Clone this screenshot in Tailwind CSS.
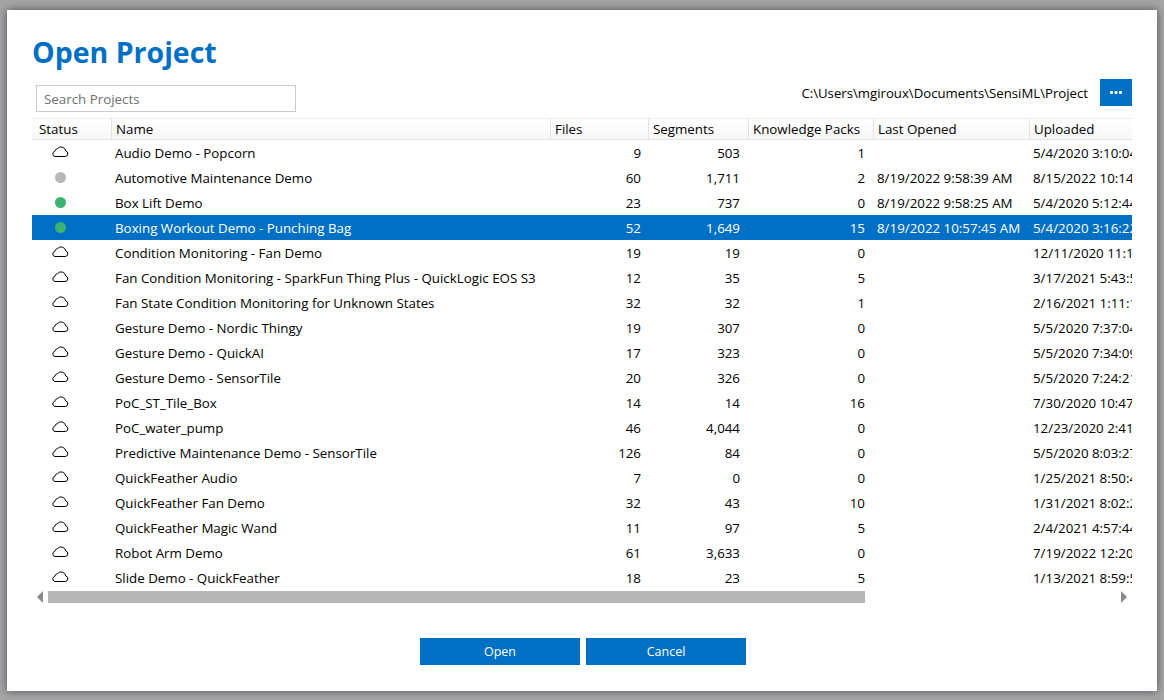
<!DOCTYPE html>
<html lang="en">

<head>
    <meta charset="UTF-8">
    <title>Open Project</title>
    <script src="https://cdn.jsdelivr.net/npm/@tailwindcss/browser@4"></script>
</head>

<body class="h-[700px] w-[1164px] overflow-hidden bg-[#a5a5a5] font-['Open_Sans',sans-serif] text-[13.33px] text-black">
    <div class="pt-[10px] pl-[7px]">
        <main class="flex h-[681px] w-[1150px] flex-col bg-white pl-[25px] shadow-[0_0_8px_rgba(40,40,60,0.7)]">
            <h1 class="pt-[23px] text-[28.5px] leading-[38px] font-bold text-[#0070c5]">Open Project</h1>

            <div class="mt-[8px] flex h-[33px] w-[1100px] justify-between pl-1">
                <input class="h-[27px] w-[260px] self-end border border-[#cccccc] px-[7px] text-[13.33px] placeholder:text-[#707070]" placeholder="Search Projects">
                <div class="flex h-[27px] items-center gap-3">
                    <span class="pt-[2px] text-[13.2px]">C:\Users\mgiroux\Documents\SensiML\Project</span>
                    <button class="flex h-[27px] w-[32px] items-center justify-center bg-[#0070c5]">
                        <svg width="12" height="3" viewBox="0 0 12 3" fill="white"><rect x="0" width="3" height="3" rx="1"/><rect x="4.5" width="3" height="3" rx="1"/><rect x="9" width="3" height="3" rx="1"/></svg>
                    </button>
                </div>
            </div>

            <div class="mt-[6px] w-[1100px] overflow-hidden">
                <table class="w-[1220px] table-fixed border-separate border-spacing-0 whitespace-nowrap">
                    <colgroup>
                        <col class="w-[80px]"><col class="w-[439px]"><col class="w-[98px]"><col class="w-[100px]"><col class="w-[125px]"><col class="w-[156px]"><col class="w-[222px]">
                    </colgroup>
                    <thead class="[&_th]:h-[22px] [&_th]:border-t [&_th]:border-r [&_th]:border-b [&_th]:border-t-[#eeeeee] [&_th]:border-r-[#e4e4e4] [&_th]:border-b-[#e4e4e4] [&_th]:bg-gradient-to-b [&_th]:from-white [&_th]:to-[#f7f7f7] [&_th]:pb-[1px] [&_th]:pl-[4px] [&_th]:text-left [&_th]:leading-[18px] [&_th]:font-normal [&_th:first-child]:pl-[7px]">
                        <tr>
                            <th>Status</th><th>Name</th><th>Files</th><th>Segments</th><th>Knowledge Packs</th><th>Last Opened</th><th>Uploaded</th>
                        </tr>
                    </thead>
                    <tbody class="[&_td]:h-[25px] [&_td]:overflow-hidden [&_td]:px-0 [&_td]:pt-[3px] [&_td]:pb-0 [&_td:nth-child(2)]:pl-[3px] [&_td:nth-child(3)]:pr-[8px] [&_td:nth-child(3)]:text-right [&_td:nth-child(4)]:pr-[9px] [&_td:nth-child(4)]:text-right [&_td:nth-child(5)]:pr-[9px] [&_td:nth-child(5)]:text-right [&_td:nth-child(6)]:pl-[3px] [&_td:nth-child(7)]:pl-[3px] [&_svg]:mb-[6px] [&_svg]:ml-[19px]">
                        <tr>
                            <td><svg width="18" height="12" viewBox="0 0 18 12" fill="none" stroke="black" stroke-width="1"><path d="M4 11.5H14.2A2.8 2.8 0 0 0 14.8 6A4.8 4.8 0 0 0 6.3 3.7A3.1 3.1 0 0 0 3.8 6.4A2.6 2.6 0 0 0 4 11.5Z"/></svg></td>
                            <td>Audio Demo - Popcorn</td><td>9</td><td>503</td><td>1</td><td></td><td>5/4/2020 3:10:04 PM</td>
                        </tr>
                        <tr>
                            <td><div class="mb-[3px] ml-[23px] h-[11px] w-[11px] rounded-full bg-[#b8b8b8]"></div></td>
                            <td>Automotive Maintenance Demo</td><td>60</td><td>1,711</td><td>2</td><td>8/19/2022 9:58:39 AM</td><td>8/15/2022 10:14:22 AM</td>
                        </tr>
                        <tr>
                            <td><div class="mb-[3px] ml-[23px] h-[11px] w-[11px] rounded-full bg-[#3cb371]"></div></td>
                            <td>Box Lift Demo</td><td>23</td><td>737</td><td>0</td><td>8/19/2022 9:58:25 AM</td><td>5/4/2020 5:12:44 PM</td>
                        </tr>
                        <tr class="bg-[#0070c5] text-white">
                            <td><div class="mb-[3px] ml-[23px] h-[11px] w-[11px] rounded-full bg-[#3cb371]"></div></td>
                            <td>Boxing Workout Demo - Punching Bag</td><td>52</td><td>1,649</td><td>15</td><td>8/19/2022 10:57:45 AM</td><td>5/4/2020 3:16:22 PM</td>
                        </tr>
                        <tr>
                            <td><svg width="18" height="12" viewBox="0 0 18 12" fill="none" stroke="black" stroke-width="1"><path d="M4 11.5H14.2A2.8 2.8 0 0 0 14.8 6A4.8 4.8 0 0 0 6.3 3.7A3.1 3.1 0 0 0 3.8 6.4A2.6 2.6 0 0 0 4 11.5Z"/></svg></td>
                            <td>Condition Monitoring - Fan Demo</td><td>19</td><td>19</td><td>0</td><td></td><td>12/11/2020 11:14:08 AM</td>
                        </tr>
                        <tr>
                            <td><svg width="18" height="12" viewBox="0 0 18 12" fill="none" stroke="black" stroke-width="1"><path d="M4 11.5H14.2A2.8 2.8 0 0 0 14.8 6A4.8 4.8 0 0 0 6.3 3.7A3.1 3.1 0 0 0 3.8 6.4A2.6 2.6 0 0 0 4 11.5Z"/></svg></td>
                            <td>Fan Condition Monitoring - SparkFun Thing Plus - QuickLogic EOS S3</td><td>12</td><td>35</td><td>5</td><td></td><td>3/17/2021 5:43:51 PM</td>
                        </tr>
                        <tr>
                            <td><svg width="18" height="12" viewBox="0 0 18 12" fill="none" stroke="black" stroke-width="1"><path d="M4 11.5H14.2A2.8 2.8 0 0 0 14.8 6A4.8 4.8 0 0 0 6.3 3.7A3.1 3.1 0 0 0 3.8 6.4A2.6 2.6 0 0 0 4 11.5Z"/></svg></td>
                            <td>Fan State Condition Monitoring for Unknown States</td><td>32</td><td>32</td><td>1</td><td></td><td>2/16/2021 1:11:17 PM</td>
                        </tr>
                        <tr>
                            <td><svg width="18" height="12" viewBox="0 0 18 12" fill="none" stroke="black" stroke-width="1"><path d="M4 11.5H14.2A2.8 2.8 0 0 0 14.8 6A4.8 4.8 0 0 0 6.3 3.7A3.1 3.1 0 0 0 3.8 6.4A2.6 2.6 0 0 0 4 11.5Z"/></svg></td>
                            <td>Gesture Demo - Nordic Thingy</td><td>19</td><td>307</td><td>0</td><td></td><td>5/5/2020 7:37:04 PM</td>
                        </tr>
                        <tr>
                            <td><svg width="18" height="12" viewBox="0 0 18 12" fill="none" stroke="black" stroke-width="1"><path d="M4 11.5H14.2A2.8 2.8 0 0 0 14.8 6A4.8 4.8 0 0 0 6.3 3.7A3.1 3.1 0 0 0 3.8 6.4A2.6 2.6 0 0 0 4 11.5Z"/></svg></td>
                            <td>Gesture Demo - QuickAI</td><td>17</td><td>323</td><td>0</td><td></td><td>5/5/2020 7:34:09 PM</td>
                        </tr>
                        <tr>
                            <td><svg width="18" height="12" viewBox="0 0 18 12" fill="none" stroke="black" stroke-width="1"><path d="M4 11.5H14.2A2.8 2.8 0 0 0 14.8 6A4.8 4.8 0 0 0 6.3 3.7A3.1 3.1 0 0 0 3.8 6.4A2.6 2.6 0 0 0 4 11.5Z"/></svg></td>
                            <td>Gesture Demo - SensorTile</td><td>20</td><td>326</td><td>0</td><td></td><td>5/5/2020 7:24:21 PM</td>
                        </tr>
                        <tr>
                            <td><svg width="18" height="12" viewBox="0 0 18 12" fill="none" stroke="black" stroke-width="1"><path d="M4 11.5H14.2A2.8 2.8 0 0 0 14.8 6A4.8 4.8 0 0 0 6.3 3.7A3.1 3.1 0 0 0 3.8 6.4A2.6 2.6 0 0 0 4 11.5Z"/></svg></td>
                            <td>PoC_ST_Tile_Box</td><td>14</td><td>14</td><td>16</td><td></td><td>7/30/2020 10:47:10 PM</td>
                        </tr>
                        <tr>
                            <td><svg width="18" height="12" viewBox="0 0 18 12" fill="none" stroke="black" stroke-width="1"><path d="M4 11.5H14.2A2.8 2.8 0 0 0 14.8 6A4.8 4.8 0 0 0 6.3 3.7A3.1 3.1 0 0 0 3.8 6.4A2.6 2.6 0 0 0 4 11.5Z"/></svg></td>
                            <td>PoC_water_pump</td><td>46</td><td>4,044</td><td>0</td><td></td><td>12/23/2020 2:41:16 PM</td>
                        </tr>
                        <tr>
                            <td><svg width="18" height="12" viewBox="0 0 18 12" fill="none" stroke="black" stroke-width="1"><path d="M4 11.5H14.2A2.8 2.8 0 0 0 14.8 6A4.8 4.8 0 0 0 6.3 3.7A3.1 3.1 0 0 0 3.8 6.4A2.6 2.6 0 0 0 4 11.5Z"/></svg></td>
                            <td>Predictive Maintenance Demo - SensorTile</td><td>126</td><td>84</td><td>0</td><td></td><td>5/5/2020 8:03:27 PM</td>
                        </tr>
                        <tr>
                            <td><svg width="18" height="12" viewBox="0 0 18 12" fill="none" stroke="black" stroke-width="1"><path d="M4 11.5H14.2A2.8 2.8 0 0 0 14.8 6A4.8 4.8 0 0 0 6.3 3.7A3.1 3.1 0 0 0 3.8 6.4A2.6 2.6 0 0 0 4 11.5Z"/></svg></td>
                            <td>QuickFeather Audio</td><td>7</td><td>0</td><td>0</td><td></td><td>1/25/2021 8:50:41 PM</td>
                        </tr>
                        <tr>
                            <td><svg width="18" height="12" viewBox="0 0 18 12" fill="none" stroke="black" stroke-width="1"><path d="M4 11.5H14.2A2.8 2.8 0 0 0 14.8 6A4.8 4.8 0 0 0 6.3 3.7A3.1 3.1 0 0 0 3.8 6.4A2.6 2.6 0 0 0 4 11.5Z"/></svg></td>
                            <td>QuickFeather Fan Demo</td><td>32</td><td>43</td><td>10</td><td></td><td>1/31/2021 8:02:22 PM</td>
                        </tr>
                        <tr>
                            <td><svg width="18" height="12" viewBox="0 0 18 12" fill="none" stroke="black" stroke-width="1"><path d="M4 11.5H14.2A2.8 2.8 0 0 0 14.8 6A4.8 4.8 0 0 0 6.3 3.7A3.1 3.1 0 0 0 3.8 6.4A2.6 2.6 0 0 0 4 11.5Z"/></svg></td>
                            <td>QuickFeather Magic Wand</td><td>11</td><td>97</td><td>5</td><td></td><td>2/4/2021 4:57:44 PM</td>
                        </tr>
                        <tr>
                            <td><svg width="18" height="12" viewBox="0 0 18 12" fill="none" stroke="black" stroke-width="1"><path d="M4 11.5H14.2A2.8 2.8 0 0 0 14.8 6A4.8 4.8 0 0 0 6.3 3.7A3.1 3.1 0 0 0 3.8 6.4A2.6 2.6 0 0 0 4 11.5Z"/></svg></td>
                            <td>Robot Arm Demo</td><td>61</td><td>3,633</td><td>0</td><td></td><td>7/19/2022 12:20:13 PM</td>
                        </tr>
                        <tr>
                            <td><svg width="18" height="12" viewBox="0 0 18 12" fill="none" stroke="black" stroke-width="1"><path d="M4 11.5H14.2A2.8 2.8 0 0 0 14.8 6A4.8 4.8 0 0 0 6.3 3.7A3.1 3.1 0 0 0 3.8 6.4A2.6 2.6 0 0 0 4 11.5Z"/></svg></td>
                            <td>Slide Demo - QuickFeather</td><td>18</td><td>23</td><td>5</td><td></td><td>1/13/2021 8:59:52 PM</td>
                        </tr>
                    </tbody>
                </table>
            </div>

            <!-- horizontal scrollbar -->
            <div class="mt-[1px] flex h-[12px] w-[1100px] items-center">
                <svg class="ml-[5px]" width="6" height="12" viewBox="0 0 6 12" fill="#8a8a8a"><path d="M6 0V12L0 6Z"/></svg>
                <div class="ml-[5px] h-[12px] w-[817px] bg-[#b6b6b6]"></div>
                <svg class="ml-[256px]" width="6" height="12" viewBox="0 0 6 12" fill="#8a8a8a"><path d="M0 0V12L6 6Z"/></svg>
            </div>

            <div class="mt-[35px] flex w-[1102px] justify-center gap-[6px] text-[12.5px] text-white">
                <button class="h-[27px] w-[160px] bg-[#0070c5] pt-[2px]">Open</button>
                <button class="h-[27px] w-[160px] bg-[#0070c5] pt-[2px]">Cancel</button>
            </div>
        </main>
    </div>
</body>

</html>
